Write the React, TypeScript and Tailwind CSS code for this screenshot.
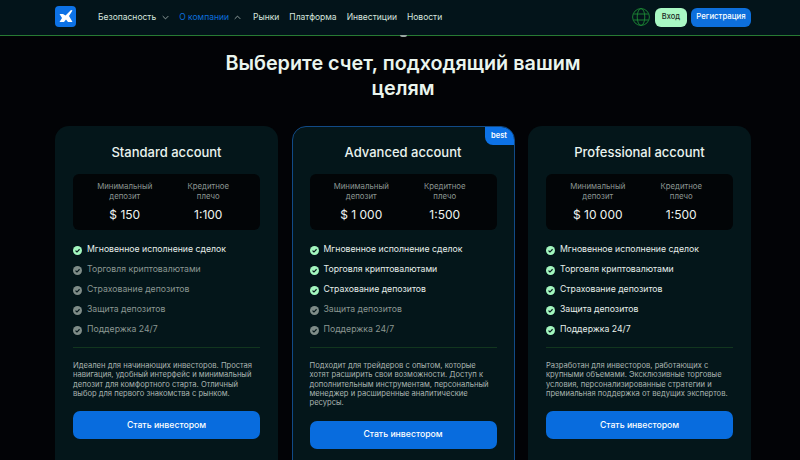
import React from "react";

const features = [
  "Мгновенное исполнение сделок",
  "Торговля криптовалютами",
  "Страхование депозитов",
  "Защита депозитов",
  "Поддержка 24/7",
];

const plans = [
  {
    title: "Standard account",
    deposit: "$ 150",
    leverage: "1:100",
    active: 1,
    best: false,
    text: "Идеален для начинающих инвесторов. Простая навигация, удобный интерфейс и минимальный депозит для комфортного старта. Отличный выбор для первого знакомства с рынком.",
  },
  {
    title: "Advanced account",
    deposit: "$ 1 000",
    leverage: "1:500",
    active: 3,
    best: true,
    text: "Подходит для трейдеров с опытом, которые хотят расширить свои возможности. Доступ к дополнительным инструментам, персональный менеджер и расширенные аналитические ресурсы.",
  },
  {
    title: "Professional account",
    deposit: "$ 10 000",
    leverage: "1:500",
    active: 5,
    best: false,
    text: "Разработан для инвесторов, работающих с крупными объемами. Эксклюзивные торговые условия, персонализированные стратегии и премиальная поддержка от ведущих экспертов.",
  },
];

const Check = ({ on }: { on: boolean }) => (
  <svg viewBox="0 0 10 10" className="w-[9px] h-[9px] shrink-0">
    <circle cx="5" cy="5" r="5" fill={on ? "#a3f7bf" : "#7f8c88"} />
    <path d="M2.8 5.1 4.4 6.7 7.3 3.6" fill="none" stroke="#04161a" strokeWidth="1.3" />
  </svg>
);

const Chevron = ({ up, color }: { up?: boolean; color: string }) => (
  <svg viewBox="0 0 10 6" className="w-[7px] h-[5px]" fill="none" stroke={color} strokeWidth="1">
    <path d={up ? "M1 5 5 1 9 5" : "M1 1 5 5 9 1"} />
  </svg>
);

const Header = () => (
  <header className="h-[36px] shrink-0 bg-[#03141a] border-b border-[#277a33] flex items-center pl-[55px] relative">
    {/* Logo */}
    <div className="w-[21px] h-[21px] rounded-[4px] bg-[#0d72e6] flex items-center justify-center mb-[2px]">
      <svg viewBox="0 0 21 21" className="w-[21px] h-[21px]" fill="#fff">
        <path d="M4.5 8 8 8 10.5 9.5 16 4 17.5 4.5 14 10 17.5 16 13 16 11 13.5 9 16 4.5 16 7 12Z" />
      </svg>
    </div>
    <nav className="flex items-center ml-[22px] text-[8.5px] text-[#d6e4df] mb-[1px]">
      <span className="flex items-center gap-[6px]">
        Безопасность
        <Chevron color="#c8d6d1" />
      </span>
      <span className="flex items-center gap-[5px] ml-[10px] text-[#0d6fdc]">
        О компании
        <Chevron up color="#c8d6d1" />
      </span>
      <span className="ml-[12px]">Рынки</span>
      <span className="ml-[10px]">Платформа</span>
      <span className="ml-[10px]">Инвестиции</span>
      <span className="ml-[10px]">Новости</span>
    </nav>
    <div className="flex items-center ml-auto mr-[49px] mb-[1px]">
      <svg viewBox="0 0 18 18" className="w-[18px] h-[18px]" fill="none" stroke="#1d8a35" strokeWidth="0.9">
        <circle cx="9" cy="9" r="8.4" />
        <ellipse cx="9" cy="9" rx="3.8" ry="8.4" />
        <path d="M1.5 6h15M1.5 12h15" />
      </svg>
      <button className="ml-[5px] w-[32px] h-[19px] rounded-[6px] bg-[#a9f8c4] text-[#1c2a26] text-[7.5px] font-medium">
        Вход
      </button>
      <button className="ml-[4px] w-[60px] h-[19px] rounded-[6px] bg-[#0d6fdc] text-white text-[7.8px] font-medium">
        Регистрация
      </button>
    </div>
    {/* Tip of the dropdown that shows under the bar */}
    <span className="absolute left-[400px] top-[35px] w-[7px] h-[2px] rounded-b-full bg-[#9aa8a3]" />
  </header>
);

const Card = ({ plan }: { plan: (typeof plans)[number] }) => (
  <div
    className={`relative flex-1 h-[360px] rounded-[14px] bg-[#04161a] ${
      plan.best ? "border border-[#114a86] overflow-hidden px-[17px]" : "px-[18px]"
    }`}
  >
    {plan.best && (
      <span className="absolute right-0 top-0 w-[29px] h-[18px] rounded-bl-[8px] rounded-tr-[12px] bg-[#0d72e6] text-white text-[7.5px] font-semibold flex items-center justify-center">
        best
      </span>
    )}
    <h2 className={`text-center text-[13px] leading-[18px] font-medium text-[#eaf3ef] ${plan.best ? "mt-[16px]" : "mt-[17px]"}`}>
      {plan.title}
    </h2>
    <div className="mt-[13px] h-[56px] rounded-[6px] bg-[#020507] grid grid-cols-2 px-[10px] pt-[8px] text-center">
      <div>
        <p className="text-[7.8px] leading-[9.5px] text-[#8b9692]">
          Минимальный
          <br />
          депозит
        </p>
        <p className="mt-[5px] text-[12px] leading-[18px] text-[#eef4f1]">{plan.deposit}</p>
      </div>
      <div>
        <p className="text-[7.8px] leading-[9.5px] text-[#8b9692]">
          Кредитное
          <br />
          плечо
        </p>
        <p className="mt-[5px] text-[12px] leading-[18px] text-[#eef4f1]">{plan.leverage}</p>
      </div>
    </div>
    <ul className="mt-[13px] flex flex-col gap-[6px]">
      {features.map((f, i) => (
        <li
          key={f}
          className={`flex items-center gap-[5px] h-[14px] text-[8.7px] ${
            i < plan.active ? "text-[#e6efeb]" : "text-[#8b9692]"
          }`}
        >
          <Check on={i < plan.active} />
          {f}
        </li>
      ))}
    </ul>
    <div className="mt-[10px] border-t border-[#12361f]" />
    <p className="mt-[13px] text-[7.6px] leading-[9.33px] text-[#aab5b1]">{plan.text}</p>
    <button className="mt-[13px] w-full h-[28px] rounded-[7px] bg-[#086cde] text-white text-[8.7px] font-medium">
      Стать инвестором
    </button>
  </div>
);

export default function App() {
  return (
    <div className="w-[800px] h-[460px] overflow-hidden bg-[#020306] flex flex-col font-['Inter',sans-serif]">
      <Header />
      <main className="ml-[55px] w-[696px]">
        <h1 className="mt-[15px] mx-auto w-[400px] text-center text-[19.8px] leading-[25px] font-semibold text-[#eaf5ee]">
          Выберите счет, подходящий вашим целям
        </h1>
        <div className="mt-[25px] flex gap-[13.5px]">
          {plans.map((p) => (
            <Card key={p.title} plan={p} />
          ))}
        </div>
      </main>
    </div>
  );
}
